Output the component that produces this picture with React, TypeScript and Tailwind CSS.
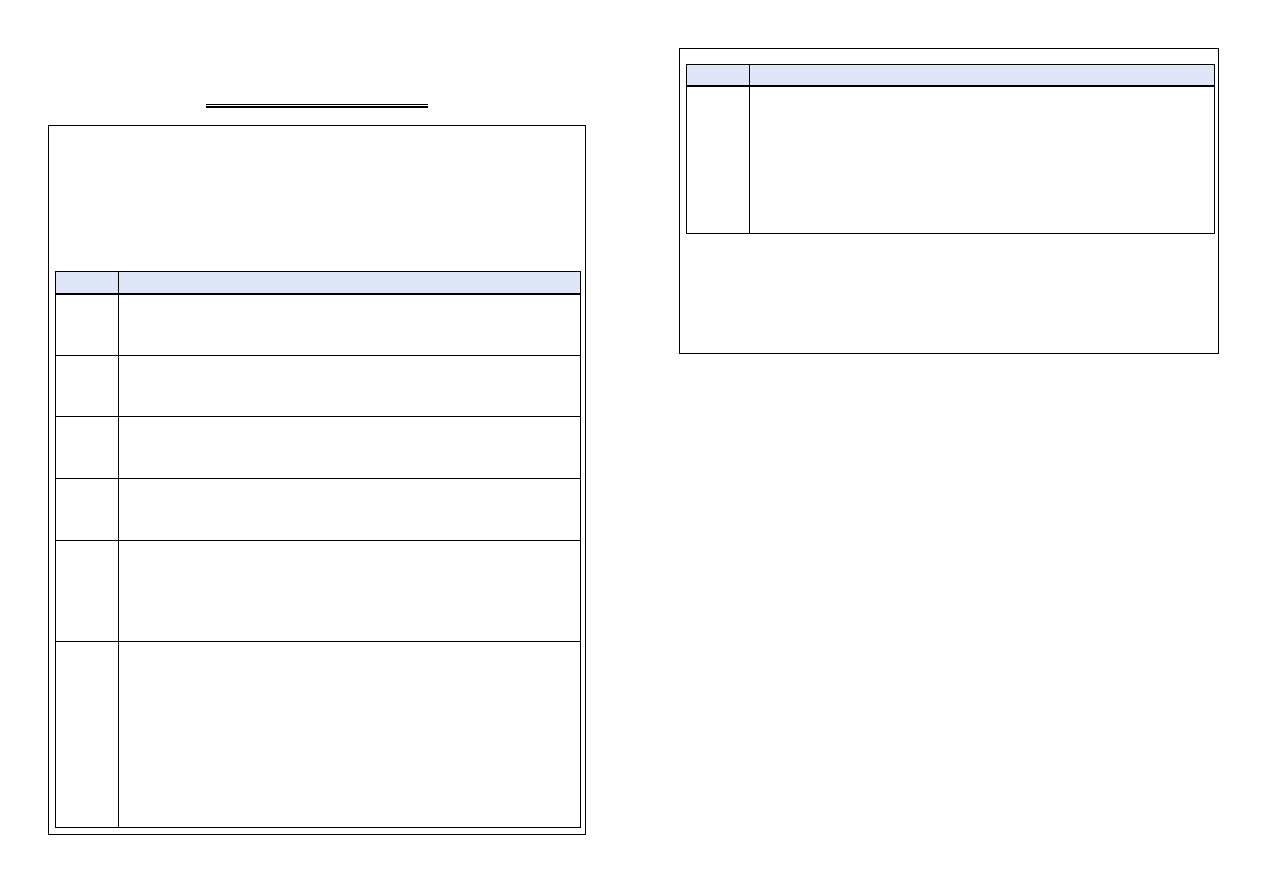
import React from 'react';

interface TableProps {
  rows: number[];
  headerH: number;
}

// row heights include the bottom rule
const rowH: Record<number, string> = {
  61: 'h-[61px]',
  62: 'h-[62px]',
  101: 'h-[101px]',
  185: 'h-[185px]',
  146: 'h-[146px]',
};

const headH: Record<number, string> = {
  23: 'h-[23px]',
  22: 'h-[22px]',
};

// empty form table: narrow label column + wide content column
const FormTable: React.FC<TableProps> = ({ rows, headerH }) => (
  <div className="border border-black">
    <div className={`flex ${headH[headerH]} bg-[#dfe6f7] border-b-2 border-black`}>
      <div className="w-[63px] border-r border-black" />
      <div className="flex-1" />
    </div>
    {rows.map((h, i) => (
      <div
        key={i}
        className={`flex ${rowH[h]} ${i < rows.length - 1 ? 'border-b border-black' : ''}`}
      >
        <div className="w-[63px] border-r border-black" />
        <div className="flex-1" />
      </div>
    ))}
  </div>
);

export default function App() {
  return (
    <div className="w-[1262px] h-[893px] bg-white flex pl-[48px] font-['Liberation_Sans',sans-serif]">
      {/* left page */}
      <div className="w-[538px] pt-[104px]">
        <div className="w-[222px] mx-auto">
          <div className="h-px bg-black" />
          <div className="h-[2px] bg-black mt-px" />
        </div>
        <div className="mt-[17px] h-[710px] border border-black pt-[145px] pl-[6px] pr-[4px]">
          <FormTable headerH={23} rows={[61, 61, 62, 62, 101, 185]} />
        </div>
      </div>

      {/* right page */}
      <div className="ml-[93px] pt-[48px]">
        <div className="w-[540px] h-[306px] border border-black pt-[15px] pl-[6px] pr-[3px]">
          <FormTable headerH={22} rows={[146]} />
        </div>
      </div>
    </div>
  );
}
